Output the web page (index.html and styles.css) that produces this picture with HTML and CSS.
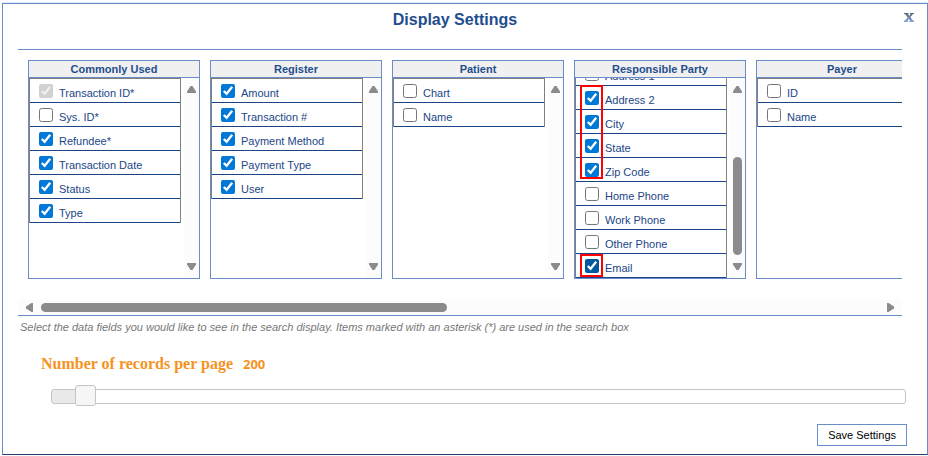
FILE: index.html
```
<!DOCTYPE html>
<html lang="en">
<head>
    <meta charset="UTF-8">
    <meta name="viewport" content="width=device-width, initial-scale=1.0">
    <title>Display Settings</title>
    <link rel="stylesheet" href="styles.css">
</head>
<body>
    <form class="dialog">
        <div class="dialog-header">
            <h1>Display Settings</h1>
            <button type="button" class="close" aria-label="Close">
                <svg width="10" height="9" viewBox="0 0 10 9">
                    <defs>
                        <linearGradient id="closeFill" x1="0" y1="0" x2="0" y2="1">
                            <stop offset="0" stop-color="#5c6370"/>
                            <stop offset="1" stop-color="#85a5dc"/>
                        </linearGradient>
                    </defs>
                    <path fill="url(#closeFill)" d="M0 0h4.500v1H4l1.300 2L6.500 1H6V0h4v1H9L6.400 4.300 9 7.500h1V9H5.500V7.500H6L4.800 5.800 3.500 7.500H4V9H0V7.500h1L3.700 4.400 1 1H0z"/>
                </svg>
            </button>
        </div>

        <div class="fields">
            <div class="panels">
                <fieldset class="panel">
                    <h2>Commonly Used</h2>
                    <div class="panel-body">
                        <ul class="list">
                            <li><label><input type="checkbox" checked disabled>Transaction ID*</label></li>
                            <li><label><input type="checkbox">Sys. ID*</label></li>
                            <li><label><input type="checkbox" checked>Refundee*</label></li>
                            <li><label><input type="checkbox" checked>Transaction Date</label></li>
                            <li><label><input type="checkbox" checked>Status</label></li>
                            <li><label><input type="checkbox" checked>Type</label></li>
                        </ul>
                        <div class="vbar">
                            <svg class="arrow" viewBox="0 0 9 8"><path d="M3.500 0h2L9 5.500V7H0V5.500z"/></svg>
                            <svg class="arrow" viewBox="0 0 9 8"><path d="M3.500 8h2L9 2.500V1H0v1.500z"/></svg>
                        </div>
                    </div>
                </fieldset>

                <fieldset class="panel">
                    <h2>Register</h2>
                    <div class="panel-body">
                        <ul class="list">
                            <li><label><input type="checkbox" checked>Amount</label></li>
                            <li><label><input type="checkbox" checked>Transaction #</label></li>
                            <li><label><input type="checkbox" checked>Payment Method</label></li>
                            <li><label><input type="checkbox" checked>Payment Type</label></li>
                            <li><label><input type="checkbox" checked>User</label></li>
                        </ul>
                        <div class="vbar">
                            <svg class="arrow" viewBox="0 0 9 8"><path d="M3.500 0h2L9 5.500V7H0V5.500z"/></svg>
                            <svg class="arrow" viewBox="0 0 9 8"><path d="M3.500 8h2L9 2.500V1H0v1.500z"/></svg>
                        </div>
                    </div>
                </fieldset>

                <fieldset class="panel">
                    <h2>Patient</h2>
                    <div class="panel-body">
                        <ul class="list">
                            <li><label><input type="checkbox">Chart</label></li>
                            <li><label><input type="checkbox">Name</label></li>
                        </ul>
                        <div class="vbar">
                            <svg class="arrow" viewBox="0 0 9 8"><path d="M3.500 0h2L9 5.500V7H0V5.500z"/></svg>
                            <svg class="arrow" viewBox="0 0 9 8"><path d="M3.500 8h2L9 2.500V1H0v1.500z"/></svg>
                        </div>
                    </div>
                </fieldset>

                <fieldset class="panel">
                    <h2>Responsible Party</h2>
                    <div class="panel-body scrolled-end">
                        <ul class="list">
                            <li><label><input type="checkbox">Address 1</label></li>
                            <li><label><input type="checkbox" checked>Address 2</label></li>
                            <li><label><input type="checkbox" checked>City</label></li>
                            <li><label><input type="checkbox" checked>State</label></li>
                            <li><label><input type="checkbox" checked>Zip Code</label></li>
                            <li><label><input type="checkbox">Home Phone</label></li>
                            <li><label><input type="checkbox">Work Phone</label></li>
                            <li><label><input type="checkbox">Other Phone</label></li>
                            <li><label><input type="checkbox" class="active" checked>Email</label></li>
                        </ul>
                        <div class="vbar">
                            <svg class="arrow" viewBox="0 0 9 8"><path d="M3.500 0h2L9 5.500V7H0V5.500z"/></svg>
                            <div class="vthumb"></div>
                            <svg class="arrow" viewBox="0 0 9 8"><path d="M3.500 8h2L9 2.500V1H0v1.500z"/></svg>
                        </div>
                        <span class="mark mark-address"></span>
                        <span class="mark mark-email"></span>
                    </div>
                </fieldset>

                <fieldset class="panel">
                    <h2>Payer</h2>
                    <div class="panel-body">
                        <ul class="list">
                            <li><label><input type="checkbox">ID</label></li>
                            <li><label><input type="checkbox">Name</label></li>
                        </ul>
                        <div class="vbar"></div>
                    </div>
                </fieldset>
            </div>
            <div class="hbar">
                <svg class="arrow-side" viewBox="0 0 8 9"><path d="M0 3.500v2L5.500 9H7V0H5.500z"/></svg>
                <div class="htrack"><div class="hthumb"></div></div>
                <svg class="arrow-side" viewBox="0 0 8 9"><path d="M8 3.500v2L2.500 9H1V0h1.500z"/></svg>
            </div>
        </div>

        <p class="hint">Select the data fields you would like to see in the search display. Items marked with an asterisk (*) are used in the search box</p>

        <div class="records">
            <label for="amount">Number of records per page</label>
            <input type="text" id="amount" class="amount" value="200" readonly>
        </div>
        <input type="range" id="slider" class="slider" aria-label="Number of records per page" min="0" max="7200" step="100" value="200">

        <div class="actions">
            <button type="button" class="save">Save Settings</button>
        </div>
    </form>

    <script>
        const slider = document.getElementById('slider');
        slider.addEventListener('input', function() {
            document.getElementById('amount').value = this.value;
            this.style.setProperty('--fill', (this.value / this.max * 100) + '%');
        });
    </script>
</body>
</html>
```
FILE: styles.css
```
* {
    box-sizing: border-box;
}
body {
    margin: 0;
    padding: 3px 0 0 2px;
    background: #fff;
    font-family: Arial, "Liberation Sans", sans-serif;
    font-size: 11px;
    color: #1c4587;
}
.dialog {
    border: 1px solid #6a8ccb;
    border-bottom-color: #1f3f6e;
    box-shadow: 0 -1px 0 #dceafa;
    padding-bottom: 8px;
}
.dialog-header {
    display: flex;
    align-items: flex-start;
    height: 45px;
    padding: 6px 10px 0 0;
}
h1 {
    flex: 1;
    margin: 0;
    padding-left: 10px;
    font-size: 16px;
    line-height: 20px;
    text-align: center;
    color: #1f4e8f;
}
.close {
    display: flex;
    width: 20px;
    padding: 3px 3px 3px 7px;
    border: none;
    background: none;
    cursor: pointer;
}
.fields {
    margin: 0 25px 0 15px;
    border-top: 1px solid #6a8ccb;
    border-bottom: 1px solid #6a8ccb;
    overflow: hidden;
}
.panels {
    display: flex;
    gap: 10px;
    padding: 10px 10px 21px;
}
.panel {
    flex: none;
    width: 172px;
    margin: 0;
    padding: 0;
    border: 1px solid #6a8ccb;
}
h2 {
    margin: 0;
    font-size: 11px;
    line-height: 16px;
    text-align: center;
    color: #1f4e8f;
    background: #f0f0f0;
    border-bottom: 1px solid #6a8ccb;
}
.panel-body {
    position: relative;
    display: flex;
    justify-content: space-between;
    align-items: flex-start;
    height: 200px;
    overflow: hidden;
}
.scrolled-end {
    align-items: flex-end;
}
.list {
    width: 152px;
    margin: 0;
    padding: 0;
    list-style: none;
    border: 1px solid #808080;
    border-bottom: none;
}
.list li {
    height: 24px;
    border-bottom: 1px solid #1c4587;
}
.list label {
    display: flex;
    align-items: flex-start;
    gap: 6px;
    padding: 5px 0 0 9px;
    line-height: 18px;
}
.list input {
    width: 14px;
    height: 14px;
    margin: 0;
    accent-color: #0078d7;
}
.list .active {
    accent-color: #005a9e;
}
.vbar {
    display: flex;
    flex-direction: column;
    align-items: center;
    justify-content: space-between;
    width: 15px;
    height: 200px;
    padding: 8px 0;
    background: #fcfcfc;
}
.vthumb {
    width: 9px;
    height: 98px;
    margin: auto 0 7px;
    border-radius: 5px;
    background: #8b8b8b;
}
.arrow {
    width: 9px;
    height: 8px;
    fill: #8b8b8b;
}
.mark {
    position: absolute;
    left: 5px;
    width: 23px;
    border: 2px solid #f00;
    pointer-events: none;
}
.mark-address {
    top: 7px;
    height: 94px;
}
.mark-email {
    bottom: 1px;
    height: 23px;
}
.hbar {
    display: flex;
    align-items: center;
    gap: 7px;
    height: 15px;
    padding: 0 8px;
    background: #fcfcfc;
}
.arrow-side {
    width: 8px;
    height: 9px;
    fill: #8b8b8b;
}
.htrack {
    flex: 1;
}
.hthumb {
    width: 48.4%;
    height: 9px;
    border-radius: 5px;
    background: #8b8b8b;
}
.hint {
    margin: 3px 17px 0;
    line-height: 16px;
    font-style: italic;
    color: #777;
}
.records {
    display: flex;
    align-items: center;
    gap: 10px;
    margin: 19px 38px 0;
    height: 20px;
    font: bold 16px "Times New Roman", "Liberation Serif", serif;
    color: #f6931f;
}
.amount {
    width: 60px;
    padding: 0;
    border: none;
    background: none;
    font: bold 13px "Open Sans", Arial, sans-serif;
    color: #f6931f;
}
.slider {
    --fill: 3%;
    -webkit-appearance: none;
    appearance: none;
    display: block;
    width: calc(100% - 69px);
    height: 21px;
    margin: 12px 21px 0 48px;
    background: none;
}
.slider::-webkit-slider-runnable-track {
    height: 15px;
    border: 1px solid #c5c5c5;
    border-radius: 3px;
    background: linear-gradient(to right, #e9e9e9 var(--fill), #fff var(--fill));
}
.slider::-webkit-slider-thumb {
    -webkit-appearance: none;
    width: 21px;
    height: 21px;
    margin-top: -5px;
    border: 1px solid #c5c5c5;
    border-radius: 3px;
    background: #f6f6f6;
}
.actions {
    display: flex;
    justify-content: flex-end;
    margin: 17px 20px 0;
}
.save {
    height: 22px;
    padding: 0 10px;
    border: 1px solid #6a8ccb;
    background: #fff;
    font: 11px Arial, "Liberation Sans", sans-serif;
    color: #000;
    cursor: pointer;
}
```
